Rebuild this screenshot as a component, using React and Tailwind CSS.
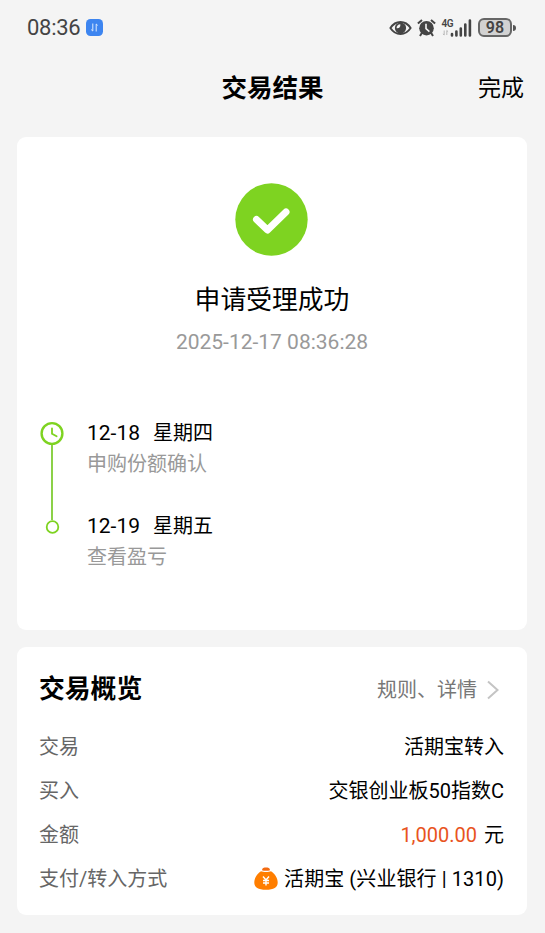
import React from 'react';

const steps = [
    { date: '12-18', day: '星期四', text: '申购份额确认' },
    { date: '12-19', day: '星期五', text: '查看盈亏' },
];

const StatusBar = () => (
    <div className="flex h-[55px] items-center justify-between pl-[27px] pr-[29px] text-[#444]">
        <div className="flex items-center gap-[5px]">
            <span className="w-[54px] font-['Roboto'] text-[22px] leading-none tracking-[-0.3px] whitespace-nowrap">08:36</span>
            <svg className="h-[17px] w-[17px]" viewBox="0 0 17 17">
                <rect width="17" height="17" rx="4.5" fill="#3d85f0" />
                <path d="M6.8 4.5v7.5l-1.6-1.4M10.2 12.5V5l1.5 1.4" fill="none" stroke="#dcebff" strokeWidth="1" />
            </svg>
        </div>
        <div className="flex items-center">
            <svg className="h-[18px] w-[23px]" viewBox="0 0 23 18">
                <path d="M1.4 9C6.5 1 16.5 1 21.6 9 16.5 17 6.5 17 1.4 9z" fill="none" stroke="#444" strokeWidth="1.9" />
                <circle cx="11.5" cy="9" r="5.6" fill="#444" />
                <path d="M11.3 5.2C11.8 8 10 9.6 7.6 9.2 7.4 7 9 5.2 11.3 5.2z" fill="#f4f4f4" />
            </svg>
            <svg className="ml-[5px] h-[18px] w-[19px]" viewBox="0 0 19 18">
                <circle cx="9.5" cy="9.2" r="7.3" fill="#444" />
                <path d="M.9 4.6 5 1M18.1 4.6 14 1M4.8 14 3 17M14.2 14l1.8 3" stroke="#444" strokeWidth="2" fill="none" />
                <path d="M9 4.8v4.9l3.4 3" fill="none" stroke="#f4f4f4" strokeWidth="1.6" />
            </svg>
            <svg className="ml-[5px] h-[20px] w-[32px]" viewBox="0 0 32 20">
                <text x="0.5" y="9.2" fontFamily="Roboto" fontWeight="600" fontSize="10" textLength="12" fill="#444">4G</text>
                <path d="M3.2 12.5v4.5l-1.3-1.2M5.8 17v-4.5l1.3 1.2" stroke="#aaa" strokeWidth="0.8" fill="none" />
                <path d="M11 16V17.5M15.400 13.5V17.5M19.8 10.5V17.5M24.3 6.5V17.5M28.9 2.5V17.5" stroke="#444" strokeWidth="2.6" strokeLinecap="round" />
            </svg>
            <div className="ml-[5px] flex h-[19px] w-[34px] items-center justify-center rounded-[6px] border-2 border-[#666] bg-[#d2d2d2] font-['Roboto'] text-[16px] leading-none font-semibold">98</div>
            <div className="ml-px h-[6px] w-[3px] rounded-r bg-[#555]" />
        </div>
    </div>
);

const Row = ({ label, children }) => (
    <div className="flex h-[44px] items-center justify-between text-[20px]">
        <span className="text-[#666]">{label}</span>
        <span className="flex items-center whitespace-pre">{children}</span>
    </div>
);

const App = () => {
    return (
        <div className="h-[933px] w-[545px] overflow-hidden bg-[#f4f4f4] font-['Roboto','Noto_Sans_CJK_SC',sans-serif] text-black">
            <StatusBar />

            {/* Title bar */}
            <div className="flex h-[82px] items-start px-[21px] pt-[13px]">
                <span className="flex-1" />
                <h1 className="text-center text-[25.5px] leading-[40px] font-bold">交易结果</h1>
                <button className="flex-1 text-right text-[23px] leading-[42px]">完成</button>
            </div>

            {/* Result card */}
            <div className="ml-[17px] mr-[18px] flex h-[493px] flex-col rounded-[9px] bg-white pt-[46px]">
                <svg className="mr-[2px] h-[73px] w-[73px] self-center" viewBox="0 0 73 73">
                    <circle cx="36.5" cy="36.5" r="36.2" fill="#7ed321" />
                    <path d="M21.5 36.5 32.5 47 51 29" fill="none" stroke="#fff" strokeWidth="7" strokeLinecap="round" strokeLinejoin="round" />
                </svg>
                <h2 className="mt-[24px] text-center text-[25.8px] leading-[40px]">申请受理成功</h2>
                <p className="mt-[6px] text-center text-[21px] leading-[32px] text-[#999]">2025-12-17 08:36:28</p>

                <div className="mt-[62px] flex pl-[23px]">
                    <svg className="h-[120px] w-[24px]" viewBox="0 0 24 120">
                        <path d="M12 24V100" stroke="#7fcc34" strokeWidth="1.8" />
                        <circle cx="12" cy="13.5" r="10.4" fill="none" stroke="#7ed321" strokeWidth="2.4" />
                        <path d="M12 8.5v5.2l4.6 2.6" fill="none" stroke="#7ed321" strokeWidth="1.8" strokeLinecap="round" />
                        <circle cx="12.5" cy="107" r="5.8" fill="#fff" stroke="#7ed321" strokeWidth="1.8" />
                    </svg>
                    <div className="-mt-[2px] ml-[23px] flex flex-col gap-[31px]">
                        {steps.map((s) => (
                            <div key={s.date} className="text-[20px] leading-[31px]">
                                <p className="flex gap-[12px]"><span className="w-[54px] text-[21px]">{s.date}</span><span>{s.day}</span></p>
                                <p className="text-[#999]">{s.text}</p>
                            </div>
                        ))}
                    </div>
                </div>
            </div>

            {/* Overview card */}
            <div className="ml-[17px] mr-[18px] mt-[17px] h-[268px] rounded-[9px] bg-white pl-[22px] pr-[23px] pt-[21px]">
                <div className="mb-[14px] flex h-[43px] items-center justify-between">
                    <h2 className="text-[25.8px] font-bold">交易概览</h2>
                    <div className="flex items-center pr-[5px] text-[20px] text-[#777]">
                        规则、详情
                        <svg className="ml-[10px] h-[20px] w-[12px]" viewBox="0 0 12 20">
                            <path d="M1 1.5 10.5 10 1 18.5" fill="none" stroke="#c4c4c4" strokeWidth="2" />
                        </svg>
                    </div>
                </div>
                <Row label="交易">活期宝转入</Row>
                <Row label="买入">交银创业板50指数C</Row>
                <Row label="金额"><span className="mr-[2px] text-[#e8541e]">1,000.00</span> 元</Row>
                <Row label="支付/转入方式">
                    <svg className="mr-[6px] h-[24px] w-[24px]" viewBox="0 0 24 24">
                        <path d="M7 4.2C9 5.2 15 5.2 17 4.2 21 7 23.7 11 23.7 15.5c0 5-4 7.3-11.7 7.3S.3 20.5.3 15.5C.3 11 3 7 7 4.2z" fill="#ff7e00" />
                        <path d="M8 3.2C8 1 10 .5 12 .5s4 .5 4 2.7c-2 .8-6 .8-8 0z" fill="#f36a10" />
                        <path d="M9 9.5 12 13l3-3.5M12 13V18.5M9 13.5h6M9 16h6" fill="none" stroke="#fff" strokeWidth="1.4" />
                    </svg>
                    <span className="tracking-[0.08px]">活期宝 (兴业银行 | 1310)</span>
                </Row>
            </div>
        </div>
    );
};

export default App;
